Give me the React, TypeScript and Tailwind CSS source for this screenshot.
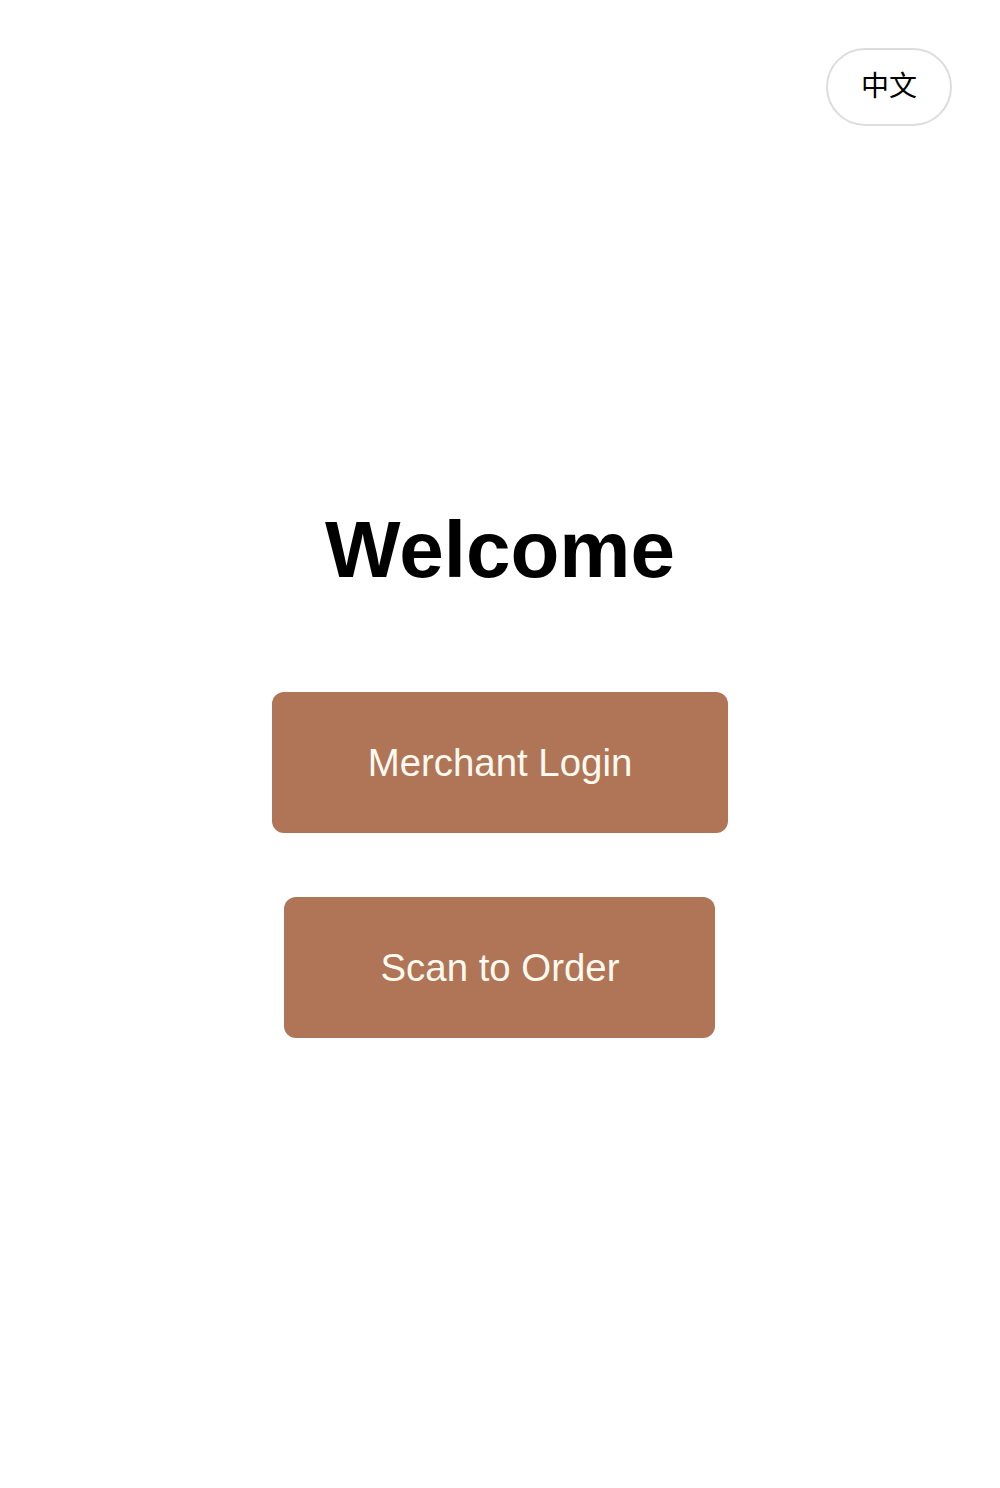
import { useState } from 'react';

const labels = {
  en: { toggle: '中文', title: 'Welcome', merchant: 'Merchant Login', scan: 'Scan to Order' },
  zh: { toggle: 'English', title: '欢迎', merchant: '商家登录', scan: '扫码点餐' },
};

export default function App() {
  const [lang, setLang] = useState<'en' | 'zh'>('en');
  const t = labels[lang];

  return (
    <div className="min-h-[1488px] w-full bg-white font-['Liberation_Sans','Noto_Sans_CJK_SC',sans-serif] text-black">
      <header className="flex justify-end pt-12 pr-12">
        <button
          onClick={() => setLang(lang === 'en' ? 'zh' : 'en')}
          className="rounded-full border-2 border-[#dddddd] bg-white px-[33px] py-[17px] text-[28px] leading-[40px] text-black"
        >
          {t.toggle}
        </button>
      </header>

      <main className="flex flex-col items-center pt-[384px]">
        <h1 className="text-[80px] font-bold leading-[80px]">{t.title}</h1>

        <div className="mt-[102px] flex flex-col items-center gap-16">
          <button className="rounded-xl bg-[#b07457] px-24 py-12 text-[38.4px] leading-[45px] text-[#fffaf0]">
            {t.merchant}
          </button>
          <button className="rounded-xl bg-[#b07457] px-24 py-12 text-[38.4px] leading-[45px] text-[#fffaf0]">
            {t.scan}
          </button>
        </div>
      </main>
    </div>
  );
}
